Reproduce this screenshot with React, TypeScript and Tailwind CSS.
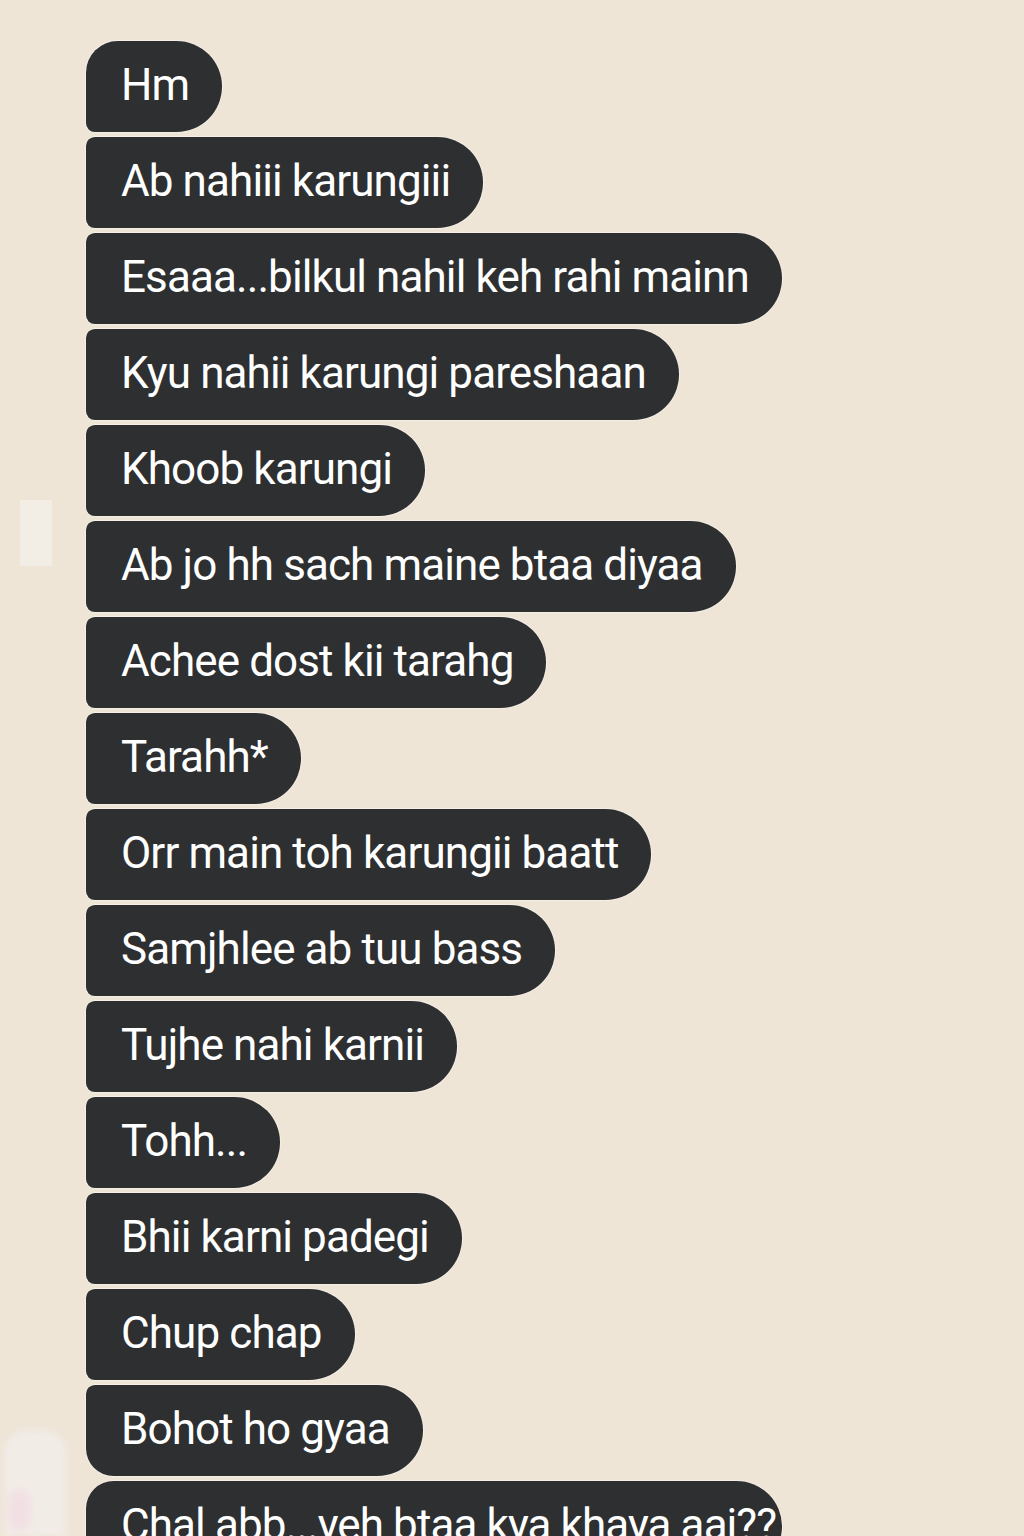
const messages = [
  "Hm",
  "Ab nahiii karungiii",
  "Esaaa...bilkul nahil keh rahi mainn",
  "Kyu nahii karungi pareshaan",
  "Khoob karungi",
  "Ab jo hh sach maine btaa diyaa",
  "Achee dost kii tarahg",
  "Tarahh*",
  "Orr main toh karungii baatt",
  "Samjhlee ab tuu bass",
  "Tujhe nahi karnii",
  "Tohh...",
  "Bhii karni padegi",
  "Chup chap",
  "Bohot ho gyaa",
  "Chal abb...yeh btaa kya khaya aaj??",
];

export default function App() {
  return (
    <div className="relative h-[1536px] w-full overflow-hidden bg-[#eee5d7] font-['Roboto','Liberation_Sans',sans-serif]">
      {/* faint bits of the screenshot on the left */}
      <div className="absolute left-[20px] top-[500px] h-[66px] w-[32px] bg-[#f2eee6]" />
      <div className="absolute left-[4px] top-[1430px] h-[106px] w-[62px] rounded-t-[24px] bg-[#f3eeec] opacity-80 blur-[3px]" />
      <div className="absolute left-[8px] top-[1490px] h-[40px] w-[22px] rounded-full bg-[#f1d9e2] opacity-70 blur-[4px]" />

      <div className="flex flex-col items-start gap-[5px] pl-[86px] pt-[41px]">
        {messages.map((m, i) => {
          const first = i === 0;
          const lastOfGroup = i === messages.length - 2;
          const startOfGroup = i === messages.length - 1;
          return (
            <div
              key={i}
              className={
                "flex h-[91px] items-center rounded-r-[46px] bg-[#2e2f31] pb-[3px] pl-[35px] text-[44px] leading-none tracking-[-0.9px] text-white whitespace-nowrap shadow-[0_0_0_1px_rgba(255,255,255,0.35)] " +
                (first
                  ? "pr-[33px] rounded-tl-[32px] rounded-bl-[9px]"
                  : lastOfGroup
                    ? "pr-[33px] rounded-tl-[9px] rounded-bl-[28px]"
                    : startOfGroup
                      ? "pr-[6px] rounded-tl-[28px] rounded-bl-[9px]"
                      : "pr-[33px] rounded-l-[9px]")
              }
            >
              {m}
            </div>
          );
        })}
      </div>
    </div>
  );
}
